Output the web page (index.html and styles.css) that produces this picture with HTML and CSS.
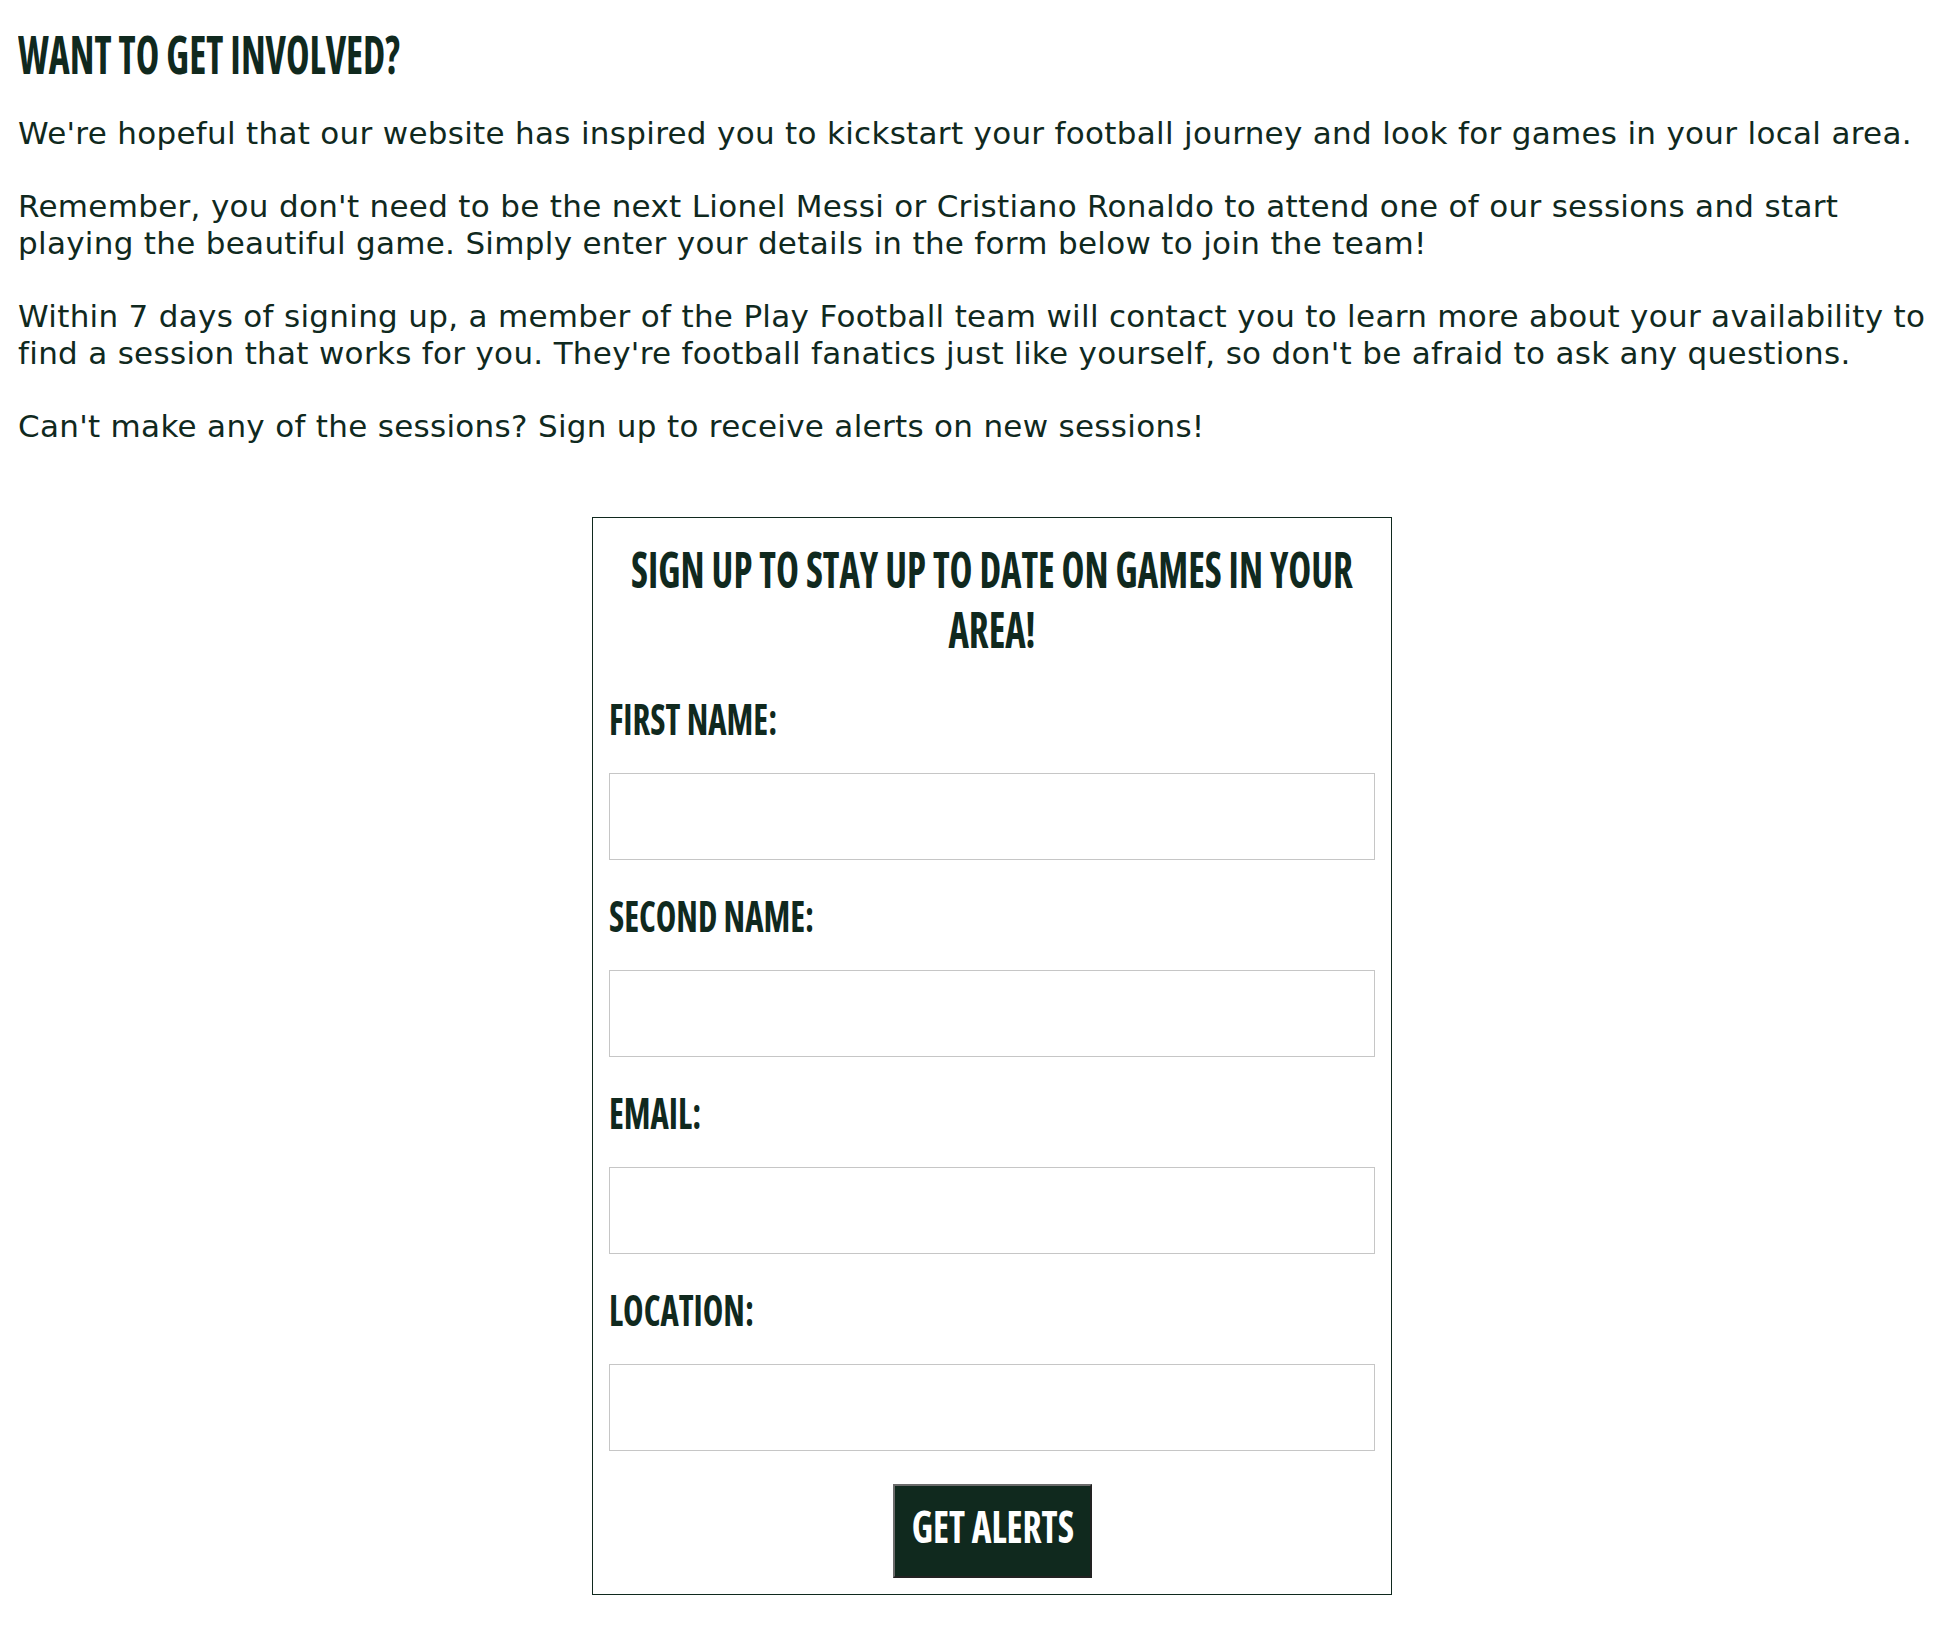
FILE: index.html
```html
<!DOCTYPE html>
<html lang="en">
<head>
<meta charset="utf-8">
<title>Want to get involved?</title>
<link rel="stylesheet" href="styles.css">
</head>
<body>
<main class="page">
  <h2 class="page-title"><span class="squeeze">Want to get involved?</span></h2>
  <p class="copy">We're hopeful that our website has inspired you to kickstart your football journey and look for games in your local area.</p>
  <p class="copy">Remember, you don't need to be the next Lionel Messi or Cristiano Ronaldo to attend one of our sessions and start playing the beautiful game. Simply enter your details in the form below to join the team!</p>
  <p class="copy">Within 7 days of signing up, a member of the Play Football team will contact you to learn more about your availability to find a session that works for you. They're football fanatics just like yourself, so don't be afraid to ask any questions.</p>
  <p class="copy">Can't make any of the sessions? Sign up to receive alerts on new sessions!</p>

  <form class="signup">
    <h3 class="signup-title">Sign up to stay up to date on games in your area!</h3>
    <label class="field-label" for="fname"><span class="squeeze">First name:</span></label>
    <input class="field-input" type="text" id="fname" name="fname">
    <label class="field-label" for="sname"><span class="squeeze">Second name:</span></label>
    <input class="field-input" type="text" id="sname" name="sname">
    <label class="field-label" for="email"><span class="squeeze">Email:</span></label>
    <input class="field-input" type="email" id="email" name="email">
    <label class="field-label" for="location"><span class="squeeze">Location:</span></label>
    <input class="field-input" type="text" id="location" name="location">
    <div class="actions">
      <button class="submit" type="button"><span class="squeeze-c">Get alerts</span></button>
    </div>
  </form>
</main>
</body>
</html>
```
FILE: styles.css
```css
:root{
  --ink:#10291e;
  --sx:0.75;
}
*{box-sizing:border-box;}
html,body{margin:0;padding:0;background:#fff;}
body{color:var(--ink);}
.page{padding:0 18px 40px;}

.squeeze,.squeeze-c{
  display:inline-block;
  transform:scaleX(var(--sx));
  white-space:nowrap;
}
.squeeze{transform-origin:left center;}
.squeeze-c{transform-origin:center center;}

.page-title{
  font-family:"Open Sans",sans-serif;
  font-stretch:75%;
  font-weight:700;
  font-size:53px;
  line-height:60px;
  text-transform:uppercase;
  margin:24px 0 31px;
}

.copy{
  font-family:"DejaVu Sans",sans-serif;
  font-size:31px;
  letter-spacing:0.3px;
  line-height:37.5px;
  margin:0 0 35px;
}

.signup{
  width:800px;
  margin:72px 0 0 calc(50% - 385px);
  border:1px solid var(--ink);
  padding:21px 16px 16px;
}
.signup-title{
  --sx:0.775;
  font-family:"Open Sans",sans-serif;
  font-stretch:75%;
  font-weight:700;
  font-size:50px;
  line-height:60px;
  text-transform:uppercase;
  text-align:center;
  margin:0 0 35px;
  width:calc(100% / var(--sx));
  transform:scaleX(var(--sx));
  transform-origin:left top;
}
.field-label{
  --sx:0.80;
  display:block;
  font-family:"Open Sans",sans-serif;
  font-stretch:75%;
  font-weight:700;
  font-size:43.4px;
  line-height:50px;
  text-transform:uppercase;
  margin:0 0 29px;
}
.field-input{
  display:block;
  width:100%;
  height:87px;
  border:1px solid #c6c6c6;
  background:#fff;
  margin:0 0 31px;
  padding:0 10px;
  font-size:24px;
}
.field-input:last-of-type{margin-bottom:33px;}
.actions{text-align:center;line-height:0;}
.submit{
  --sx:0.83;
  width:199px;
  height:94px;
  background:var(--ink);
  color:#fff;
  border-style:solid;
  border-width:2px;
  border-color:#6b6b6b #222 #222 #6b6b6b;
  font-family:"Open Sans",sans-serif;
  font-stretch:75%;
  font-weight:700;
  font-size:45px;
  line-height:50px;
  text-transform:uppercase;
  padding:0 0 10px;
  cursor:pointer;
}
```
